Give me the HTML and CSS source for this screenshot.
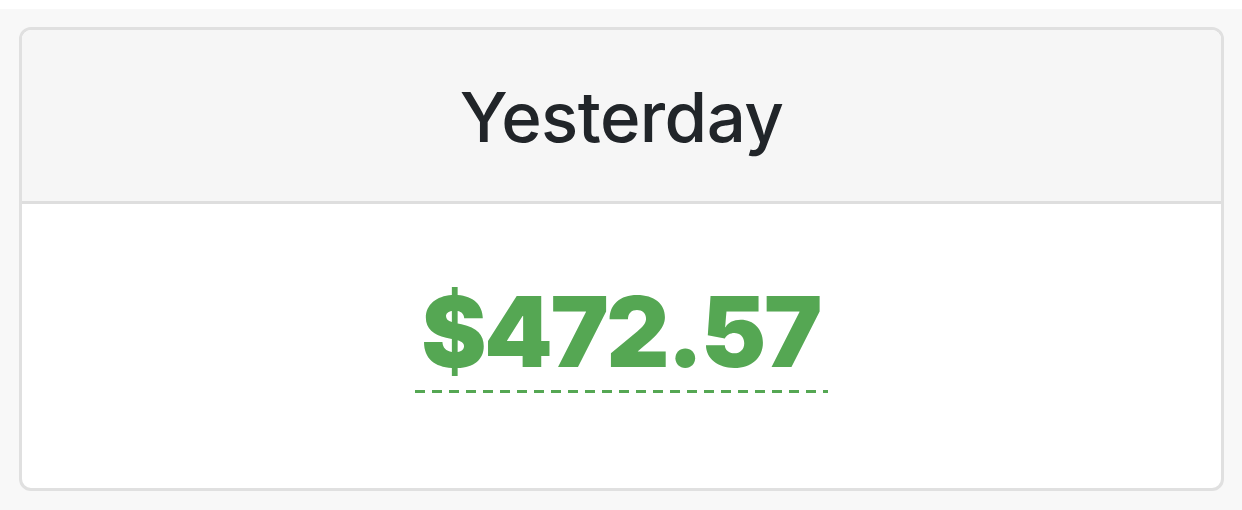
FILE: index.html
```html
<!DOCTYPE html>
<html>
<head>
<meta charset="utf-8">
<link rel="stylesheet" href="styles.css">
</head>
<body>
<div class="page">
  <div class="card">
    <div class="card-header">Yesterday</div>
    <div class="card-body">
      <span class="amount">$472.57</span>
    </div>
  </div>
</div>
</body>
</html>
```
FILE: styles.css
```css
html, body {
  margin: 0;
  padding: 0;
  background: #ffffff;
}
.page {
  margin-top: 9px;
  height: 501px;
  box-sizing: border-box;
  background: #f8f8f8;
  padding: 18px 19px 0 19px;
}
.card {
  width: 1205px;
  height: 464px;
  box-sizing: border-box;
  border: 3px solid #e0e0e0;
  border-radius: 12px;
  background: #ffffff;
  overflow: hidden;
  display: flex;
  flex-direction: column;
}
.card-header {
  height: 174px;
  border-bottom: 3px solid #dedede;
  background: #f6f6f6;
  display: flex;
  align-items: center;
  justify-content: center;
  font-family: Inter, "Noto Sans", sans-serif;
  font-size: 69px;
  font-weight: 500;
  color: #212529;
  letter-spacing: -0.6px;
  padding-top: 2px;
  box-sizing: border-box;
}
.card-body {
  flex: 1;
  display: flex;
  align-items: center;
  justify-content: center;
}
.amount {
  font-family: Inter, "Liberation Sans", sans-serif;
  font-size: 98px;
  font-weight: 900;
  color: #55a753;
  line-height: 1;
  letter-spacing: -2.5px;
  padding: 0 8px 12px 6px;
  margin-bottom: 16px;
  background-image: repeating-linear-gradient(to right, #55a753 0, #55a753 10px, transparent 10px, transparent 17px);
  background-size: 100% 3px;
  background-position: left bottom;
  background-repeat: no-repeat;
}
```
